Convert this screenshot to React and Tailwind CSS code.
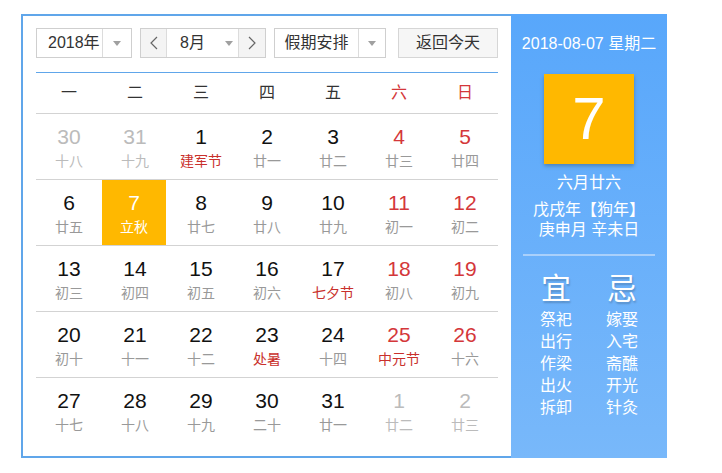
import React from "react";

const rows = [
  [
    { d: "30", l: "十八", o: true },
    { d: "31", l: "十九", o: true },
    { d: "1", l: "建军节", h: true },
    { d: "2", l: "廿一" },
    { d: "3", l: "廿二" },
    { d: "4", l: "廿三", w: true },
    { d: "5", l: "廿四", w: true },
  ],
  [
    { d: "6", l: "廿五" },
    { d: "7", l: "立秋", today: true },
    { d: "8", l: "廿七" },
    { d: "9", l: "廿八" },
    { d: "10", l: "廿九" },
    { d: "11", l: "初一", w: true },
    { d: "12", l: "初二", w: true },
  ],
  [
    { d: "13", l: "初三" },
    { d: "14", l: "初四" },
    { d: "15", l: "初五" },
    { d: "16", l: "初六" },
    { d: "17", l: "七夕节", h: true },
    { d: "18", l: "初八", w: true },
    { d: "19", l: "初九", w: true },
  ],
  [
    { d: "20", l: "初十" },
    { d: "21", l: "十一" },
    { d: "22", l: "十二" },
    { d: "23", l: "处暑", h: true },
    { d: "24", l: "十四" },
    { d: "25", l: "中元节", w: true, h: true },
    { d: "26", l: "十六", w: true },
  ],
  [
    { d: "27", l: "十七" },
    { d: "28", l: "十八" },
    { d: "29", l: "十九" },
    { d: "30", l: "二十" },
    { d: "31", l: "廿一" },
    { d: "1", l: "廿二", o: true },
    { d: "2", l: "廿三", o: true },
  ],
];

const weekdays = ["一", "二", "三", "四", "五", "六", "日"];

function Tri() {
  return (
    <span className="block w-0 h-0 border-x-[4px] border-x-transparent border-t-[5px] border-t-[#a0a0a0]" />
  );
}

function Chevron({ dir }) {
  return (
    <svg width="10" height="16" viewBox="0 0 10 16" fill="none">
      <polyline
        points={dir === "left" ? "8,2 2,8 8,14" : "2,2 8,8 2,14"}
        stroke="#666"
        strokeWidth="1.2"
      />
    </svg>
  );
}

function Cell({ c }) {
  let numColor = "text-[#111]";
  let lunColor = "text-[#999]";
  if (c.o) {
    numColor = "text-[#bbb]";
    lunColor = "text-[#bbb]";
  } else if (c.w) {
    numColor = "text-[#d4373a]";
  }
  if (c.h) lunColor = "text-[#c9302c]";
  if (c.today) {
    return (
      <div className="h-[65px] mr-[2px] bg-[#ffb800] flex flex-col items-center pt-[11px]">
        <div className="text-[21px] leading-[24px] text-white">{c.d}</div>
        <div className="text-[14px] leading-[22px] mt-[1px] text-white">{c.l}</div>
      </div>
    );
  }
  return (
    <div className="h-[65px] flex flex-col items-center pt-[11px]">
      <div className={`text-[21px] leading-[24px] ${numColor}`}>{c.d}</div>
      <div className={`text-[14px] leading-[22px] mt-[1px] ${lunColor}`}>{c.l}</div>
    </div>
  );
}

export default function App() {
  return (
    <div className="w-[722px] h-[473px] bg-white pt-[14px] pl-[21px] font-['Liberation_Sans','Noto_Sans_CJK_SC',sans-serif]">
      <div className="flex h-[444px]">
        <div className="w-[490px] border-l-2 border-t-2 border-b-2 border-[#60a6ea] pl-[13px] pr-[13px] pt-[12px] flex flex-col">
          <div className="flex items-center h-[30px] text-[16px] text-[#333]">
            <div className="w-[96px] h-[30px] border border-[#cfcfcf] flex bg-white">
              <div className="w-[66px] pl-[11px] flex items-center border-r border-[#dcdcdc]">2018年</div>
              <div className="flex-1 flex items-center justify-center">
                <Tri />
              </div>
            </div>
            <div className="ml-[8px] w-[126px] h-[30px] border border-[#cfcfcf] flex">
              <div className="w-[26px] bg-[#f4f4f4] border-r border-[#dcdcdc] flex items-center justify-center">
                <Chevron dir="left" />
              </div>
              <div className="w-[71px] bg-white flex items-center">
                <span className="ml-[13px]">8月</span>
                <span className="ml-[20px]">
                  <Tri />
                </span>
              </div>
              <div className="flex-1 bg-[#f4f4f4] border-l border-[#dcdcdc] flex items-center justify-center">
                <Chevron dir="right" />
              </div>
            </div>
            <div className="ml-[8px] w-[112px] h-[30px] border border-[#cfcfcf] flex bg-white">
              <div className="w-[84px] flex items-center justify-center border-r border-[#dcdcdc]">假期安排</div>
              <div className="flex-1 flex items-center justify-center">
                <Tri />
              </div>
            </div>
            <div className="ml-auto w-[100px] h-[30px] border border-[#d6d6d6] bg-[#f6f6f6] flex items-center justify-center">
              返回今天
            </div>
          </div>
          <div className="mt-[14px] h-px bg-[#60a6ea]" />
          <div className="grid grid-cols-7 h-[41px] border-b border-[#d3d3d3] text-[16px]">
            {weekdays.map((w, i) => (
              <div
                key={w}
                className={`flex items-center justify-center ${i >= 5 ? "text-[#d4373a]" : "text-[#333]"}`}
              >
                {w}
              </div>
            ))}
          </div>
          {rows.map((r, ri) => (
            <div
              key={ri}
              className={`grid grid-cols-7 ${ri < 4 ? "border-b border-[#d3d3d3]" : ""}`}
            >
              {r.map((c, ci) => (
                <Cell key={ci} c={c} />
              ))}
            </div>
          ))}
        </div>
        <div className="w-[156px] h-full bg-gradient-to-b from-[#58a7fb] to-[#78b8fa] px-[12px] pt-[20px] flex flex-col items-center text-white">
          <div className="text-[16px] leading-[20px] whitespace-nowrap">2018-08-07 星期二</div>
          <div className="mt-[20px] w-[90px] h-[90px] bg-[#ffb800] shadow-[0_2px_4px_rgba(0,0,0,0.25)] flex items-center justify-center text-[60px] leading-none">
            7
          </div>
          <div className="mt-[9px] text-[16px] leading-[20px]">六月廿六</div>
          <div className="mt-[7px] text-[16px] leading-[20px] whitespace-nowrap">戊戌年【狗年】</div>
          <div className="text-[16px] leading-[20px] whitespace-nowrap">庚申月 辛未日</div>
          <div className="mt-[14px] w-full h-[2px] bg-[#a9d0fb]" />
          <div className="w-full grid grid-cols-2 mt-[16px]">
            <div className="flex flex-col items-center">
              <div className="text-[30px] leading-[34px] [text-shadow:1px_2px_2px_rgba(0,0,0,0.2)]">宜</div>
              <div className="mt-[3px] text-[16px] leading-[22px] text-center">
                <div>祭祀</div>
                <div>出行</div>
                <div>作梁</div>
                <div>出火</div>
                <div>拆卸</div>
              </div>
            </div>
            <div className="flex flex-col items-center">
              <div className="text-[30px] leading-[34px] [text-shadow:1px_2px_2px_rgba(0,0,0,0.2)]">忌</div>
              <div className="mt-[3px] text-[16px] leading-[22px] text-center">
                <div>嫁娶</div>
                <div>入宅</div>
                <div>斋醮</div>
                <div>开光</div>
                <div>针灸</div>
              </div>
            </div>
          </div>
        </div>
      </div>
    </div>
  );
}
